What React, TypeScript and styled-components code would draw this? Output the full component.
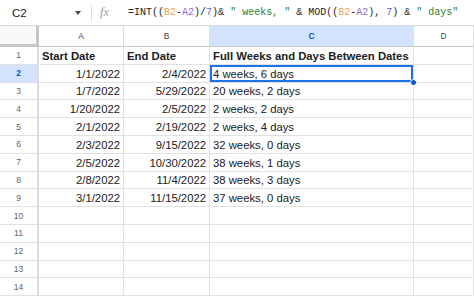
import React from 'react';
import styled, { createGlobalStyle } from 'styled-components';

const GlobalStyle = createGlobalStyle`
  html, body {
    margin: 0;
    padding: 0;
    background: #fff;
    overflow: hidden;
  }
  body {
    font-family: "Liberation Sans", Arial, sans-serif;
  }
`;

const Page = styled.div`
  width: 474px;
  height: 297px;
  overflow: hidden;
  background: #fff;
`;

const FormulaBar = styled.div`
  display: flex;
  align-items: center;
  height: 26px;
  border-bottom: 1px solid #dadce0;
  box-sizing: border-box;
`;

const NameBox = styled.div`
  width: 61px;
  padding-left: 12px;
  font-size: 11.5px;
  color: #202124;
`;

const Caret = styled.div`
  width: 0;
  height: 0;
  border-left: 3.5px solid transparent;
  border-right: 3.5px solid transparent;
  border-top: 4px solid #444746;
  margin-left: 2px;
`;

const Divider = styled.div`
  width: 1px;
  height: 16px;
  background: #dadce0;
  margin: 0 8px 0 10px;
`;

const Fx = styled.span`
  font-family: "Liberation Serif", serif;
  font-style: italic;
  font-size: 12.5px;
  color: #9aa0a6;
  width: 28px;
`;

const Formula = styled.div`
  font-family: "Liberation Mono", "DejaVu Sans Mono", monospace;
  font-size: 10px;
  white-space: pre;
  color: #202124;
`;

const Token = styled.span<{ $kind?: 'b' | 'a' | 'num' | 'str' }>`
  color: ${({ $kind }) =>
    $kind === 'b' ? '#e8a15c' :
    $kind === 'a' ? '#8e6bc9' :
    $kind === 'num' ? '#5b5fc7' :
    $kind === 'str' ? '#2f7d32' : '#202124'};
`;

const Grid = styled.div`
  display: grid;
  grid-template-columns: 39px 85px 86px 204px 60px;
  grid-template-rows: 21px repeat(14, 17.8px);
`;

const Corner = styled.div`
  background: #f8f9fa;
  border-right: 3px solid #c4c7c5;
  border-bottom: 3px solid #c4c7c5;
  box-sizing: border-box;
`;

const ColHeader = styled.div<{ $active?: boolean }>`
  display: flex;
  align-items: center;
  justify-content: center;
  font-size: 8.5px;
  color: ${({ $active }) => ($active ? '#0b57d0' : '#444746')};
  font-weight: ${({ $active }) => ($active ? 700 : 400)};
  background: ${({ $active }) => ($active ? '#d3e3fd' : '#fff')};
  border-right: 1px solid #dadce0;
  border-bottom: 1px solid #c4c7c5;
  box-sizing: border-box;
`;

const RowHeader = styled.div<{ $active?: boolean }>`
  display: flex;
  align-items: center;
  justify-content: center;
  font-size: 8.5px;
  color: ${({ $active }) => ($active ? '#0b57d0' : '#5f6368')};
  font-weight: ${({ $active }) => ($active ? 700 : 400)};
  background: ${({ $active }) => ($active ? '#d3e3fd' : '#fff')};
  border-right: 2px solid #dadce0;
  border-bottom: 1px solid #e1e1e1;
  box-sizing: border-box;
`;

const Cell = styled.div<{ $align?: 'left' | 'right'; $bold?: boolean; $selected?: boolean }>`
  position: relative;
  display: flex;
  align-items: center;
  justify-content: ${({ $align }) => ($align === 'right' ? 'flex-end' : 'flex-start')};
  padding: 1px 3px 0;
  font-size: 11.3px;
  font-weight: ${({ $bold }) => ($bold ? 700 : 400)};
  color: #202124;
  border-right: 1px solid #e1e1e1;
  border-bottom: 1px solid #e1e1e1;
  box-sizing: border-box;
  white-space: nowrap;
  overflow: visible;
  box-shadow: ${({ $selected }) => ($selected ? 'inset 0 0 0 2px #1a73e8' : 'none')};
`;

const FillHandle = styled.span`
  position: absolute;
  right: -4px;
  bottom: -4px;
  width: 7px;
  height: 7px;
  border-radius: 50%;
  background: #0b57d0;
  border: 1px solid #fff;
  box-sizing: border-box;
  z-index: 2;
`;

const rows: [string, string, string][] = [
  ['1/1/2022', '2/4/2022', '4 weeks, 6 days'],
  ['1/7/2022', '5/29/2022', '20 weeks, 2 days'],
  ['1/20/2022', '2/5/2022', '2 weeks, 2 days'],
  ['2/1/2022', '2/19/2022', '2 weeks, 4 days'],
  ['2/3/2022', '9/15/2022', '32 weeks, 0 days'],
  ['2/5/2022', '10/30/2022', '38 weeks, 1 days'],
  ['2/8/2022', '11/4/2022', '38 weeks, 3 days'],
  ['3/1/2022', '11/15/2022', '37 weeks, 0 days'],
];

const App = () => {
  const empty = Array.from({ length: 5 }, (_, i) => i + 10);

  return (
    <Page>
      <GlobalStyle />
      <FormulaBar>
        <NameBox>C2</NameBox>
        <Caret />
        <Divider />
        <Fx>fx</Fx>
        <Formula>
          =INT((<Token $kind="b">B2</Token>-<Token $kind="a">A2</Token>)/<Token $kind="num">7</Token>)&amp;{' '}
          <Token $kind="str">" weeks, "</Token> &amp; MOD((<Token $kind="b">B2</Token>-<Token $kind="a">A2</Token>),{' '}
          <Token $kind="num">7</Token>) &amp; <Token $kind="str">" days"</Token>
        </Formula>
      </FormulaBar>
      <Grid>
        <Corner />
        <ColHeader>A</ColHeader>
        <ColHeader>B</ColHeader>
        <ColHeader $active>C</ColHeader>
        <ColHeader>D</ColHeader>

        <RowHeader>1</RowHeader>
        <Cell $bold>Start Date</Cell>
        <Cell $bold>End Date</Cell>
        <Cell $bold>Full Weeks and Days Between Dates</Cell>
        <Cell />

        {rows.map(([start, end, result], i) => (
          <React.Fragment key={i}>
            <RowHeader $active={i === 0}>{i + 2}</RowHeader>
            <Cell $align="right">{start}</Cell>
            <Cell $align="right">{end}</Cell>
            <Cell $selected={i === 0}>
              {result}
              {i === 0 && <FillHandle />}
            </Cell>
            <Cell />
          </React.Fragment>
        ))}

        {empty.map((n) => (
          <React.Fragment key={n}>
            <RowHeader>{n}</RowHeader>
            <Cell />
            <Cell />
            <Cell />
            <Cell />
          </React.Fragment>
        ))}
      </Grid>
    </Page>
  );
};

export default App;
